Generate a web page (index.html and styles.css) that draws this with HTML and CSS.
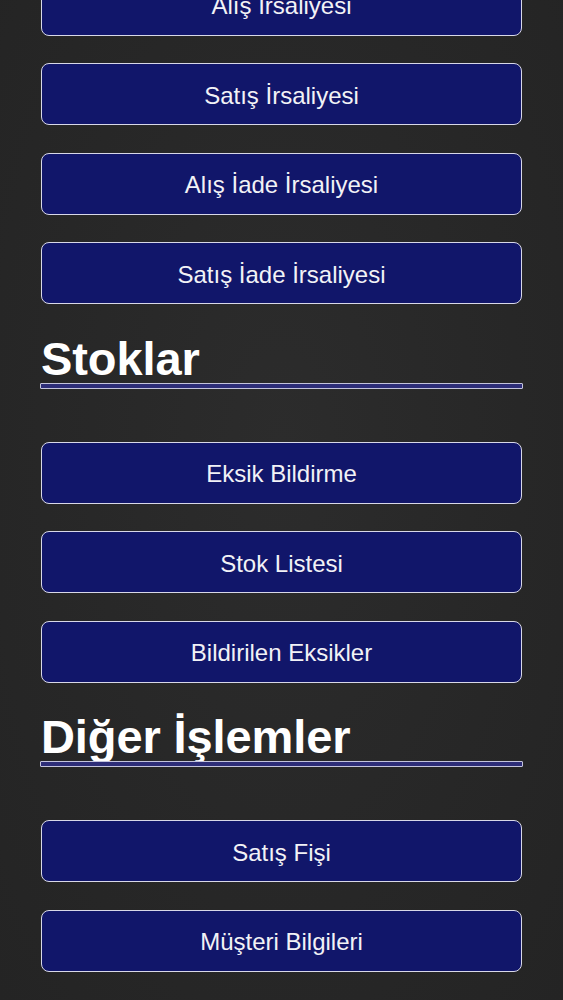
FILE: index.html
```html
<!DOCTYPE html>
<html lang="tr">
<head>
<meta charset="utf-8">
<title>Menü</title>
<link rel="stylesheet" href="styles.css">
</head>
<body>
<main class="menu">
  <section class="group group-first">
    <button class="menu-btn">Alış İrsaliyesi</button>
    <button class="menu-btn">Satış İrsaliyesi</button>
    <button class="menu-btn">Alış İade İrsaliyesi</button>
    <button class="menu-btn">Satış İade İrsaliyesi</button>
  </section>
  <section class="group">
    <h2 class="group-title">Stoklar</h2>
    <div class="rule"></div>
    <div class="buttons">
      <button class="menu-btn">Eksik Bildirme</button>
      <button class="menu-btn">Stok Listesi</button>
      <button class="menu-btn">Bildirilen Eksikler</button>
    </div>
  </section>
  <section class="group">
    <h2 class="group-title">Diğer İşlemler</h2>
    <div class="rule"></div>
    <div class="buttons">
      <button class="menu-btn">Satış Fişi</button>
      <button class="menu-btn">Müşteri Bilgileri</button>
    </div>
  </section>
</main>
</body>
</html>
```
FILE: styles.css
```css
html, body {
  margin: 0;
  padding: 0;
  background: #272727;
  height: 100%;
  overflow: hidden;
}
body {
  background: radial-gradient(ellipse at 50% 45%, #2c2c2c 0%, #272727 60%, #242424 100%);
  font-family: "Liberation Sans", Arial, sans-serif;
  color: #f2f2f2;
}
.menu {
  display: flex;
  flex-direction: column;
  padding: 0 41px 0 41px;
  margin-top: -26.5px;
}
.group {
  display: flex;
  flex-direction: column;
}
.group-first {
  gap: 27.5px;
}
.buttons {
  display: flex;
  flex-direction: column;
  gap: 27.5px;
  margin-top: 53px;
}
.menu-btn {
  height: 62px;
  width: 481px;
  box-sizing: border-box;
  background: #11166a;
  border: 1.5px solid #d8d8e8;
  border-radius: 8px;
  color: #f2f2f6;
  font-family: "Liberation Sans", Arial, sans-serif;
  font-size: 24px;
  display: flex;
  align-items: center;
  justify-content: center;
  padding: 3px 0 0 0;
}
.group-title {
  margin: 30.5px 0 0 0;
  font-size: 47px;
  line-height: 48px;
  height: 48px;
  font-weight: 600;
  color: #ffffff;
  letter-spacing: -0.1px;
  white-space: nowrap;
}
.rule {
  margin-left: -1px;
  width: 483px;
  height: 6px;
  box-sizing: border-box;
  border: 1px solid #c4c4dc;
  border-radius: 1px;
  background: #2d2d78;
}
```
